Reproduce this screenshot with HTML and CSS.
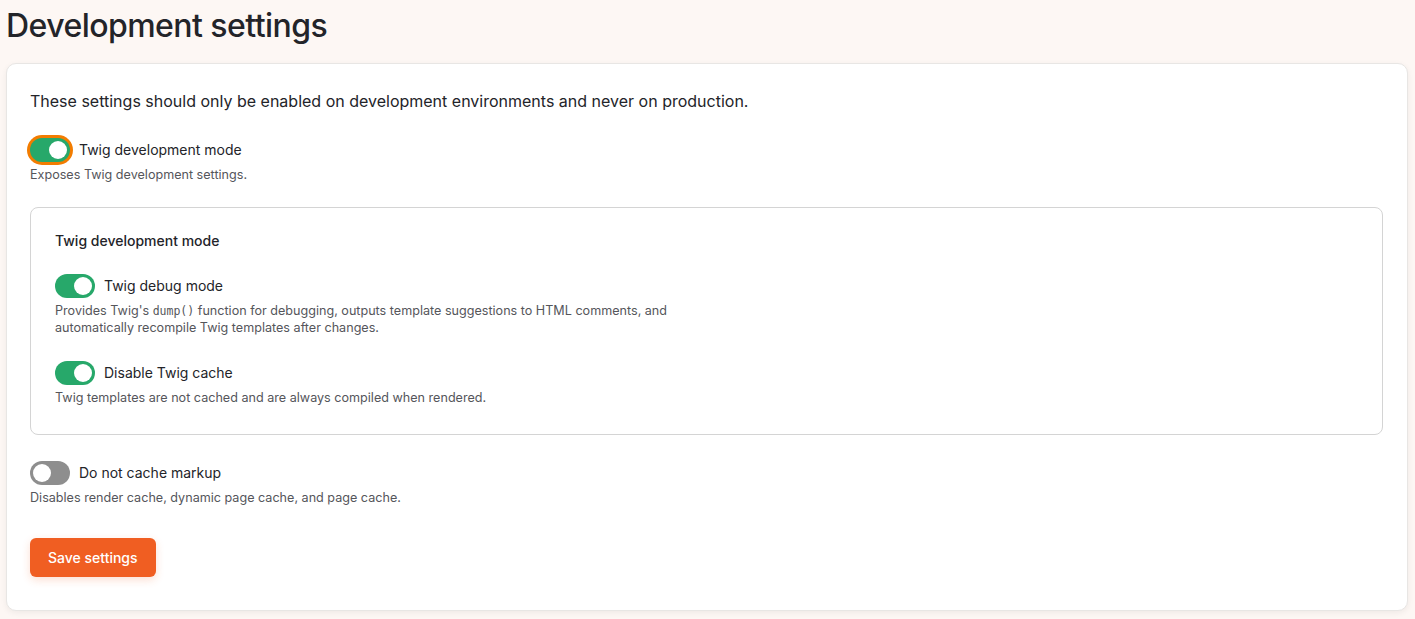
FILE: index.html
```html
<!DOCTYPE html>
<html lang="en">
<head>
  <meta charset="UTF-8">
  <title>Development settings</title>
  <link rel="stylesheet" href="styles.css">
</head>
<body>
  <h1 class="page-title">Development settings</h1>

  <form class="card">
    <p class="intro">These settings should only be enabled on development environments and never on production.</p>

    <div class="field">
      <label class="toggle-row">
        <span class="toggle on focused"><span class="knob"></span></span>
        <span class="toggle-label">Twig development mode</span>
      </label>
      <div class="description">Exposes Twig development settings.</div>
    </div>

    <fieldset class="group">
      <div class="group-title">Twig development mode</div>

      <div class="field">
        <label class="toggle-row">
          <span class="toggle on"><span class="knob"></span></span>
          <span class="toggle-label">Twig debug mode</span>
        </label>
        <div class="description">Provides Twig's <code>dump()</code> function for debugging, outputs template suggestions to HTML comments, and automatically recompile Twig templates after changes.</div>
      </div>

      <div class="field">
        <label class="toggle-row">
          <span class="toggle on"><span class="knob"></span></span>
          <span class="toggle-label">Disable Twig cache</span>
        </label>
        <div class="description">Twig templates are not cached and are always compiled when rendered.</div>
      </div>
    </fieldset>

    <div class="field">
      <label class="toggle-row">
        <span class="toggle"><span class="knob"></span></span>
        <span class="toggle-label">Do not cache markup</span>
      </label>
      <div class="description">Disables render cache, dynamic page cache, and page cache.</div>
    </div>

    <button type="button" class="btn-primary">Save settings</button>
  </form>
</body>
</html>
```

FILE: styles.css
```css
body {
  margin: 0;
  padding: 0 7px 8px 6px;
  background: #fdf7f4;
  font-family: Inter, 'Noto Sans', sans-serif;
  color: #232429;
}

.page-title {
  margin: 0;
  padding: 6px 0 17px;
  font-size: 32px;
  font-weight: 500;
  letter-spacing: -0.55px;
  line-height: 40px;
}

.card {
  background: #fff;
  border: 1px solid #e8e6e4;
  border-radius: 10px;
  box-shadow: 0 2px 6px rgba(0,0,0,0.06);
  padding: 27px 24px 33px 23px;
}

.intro {
  margin: 0 0 27px;
  font-size: 16px;
  line-height: 20px;
}

.field {
  margin-bottom: 24px;
}

.group .field {
  margin-bottom: 25px;
}

.group .field:last-child {
  margin-bottom: 0;
}

.toggle-row {
  display: flex;
  align-items: center;
  gap: 9px;
}

.toggle {
  position: relative;
  width: 40px;
  height: 24px;
  border-radius: 12px;
  background: #8e8e8e;
  flex-shrink: 0;
}

.toggle.on {
  background: #27a86a;
}

.toggle.focused {
  box-shadow: 0 0 0 3px #f27c00;
}

.toggle .knob {
  position: absolute;
  top: 3px;
  left: 3px;
  width: 18px;
  height: 18px;
  border-radius: 50%;
  background: #fff;
}

.toggle.on .knob {
  left: 19px;
}

.toggle-label {
  font-size: 14px;
  line-height: 24px;
}

.description {
  margin-top: 4px;
  font-size: 12.6px;
  line-height: 17px;
  color: #55565b;
  max-width: 660px;
}

.description code {
  font-family: 'DejaVu Sans Mono', monospace;
  font-size: 11.5px;
  line-height: 1;
}

.group {
  margin: 0 0 26px;
  padding: 25px 24px 28px;
  border: 1px solid #d4d4d4;
  border-radius: 8px;
}

.group-title {
  font-size: 14px;
  font-weight: 500;
  line-height: 16px;
  margin-bottom: 25px;
}

.btn-primary {
  margin-top: 8px;
  background: #f05e22;
  color: #fff;
  border: none;
  border-radius: 6px;
  padding: 0 18px;
  height: 39px;
  font-family: Inter, sans-serif;
  font-size: 14px;
  font-weight: 500;
  box-shadow: 0 3px 8px rgba(240,94,34,0.2);
}
```
